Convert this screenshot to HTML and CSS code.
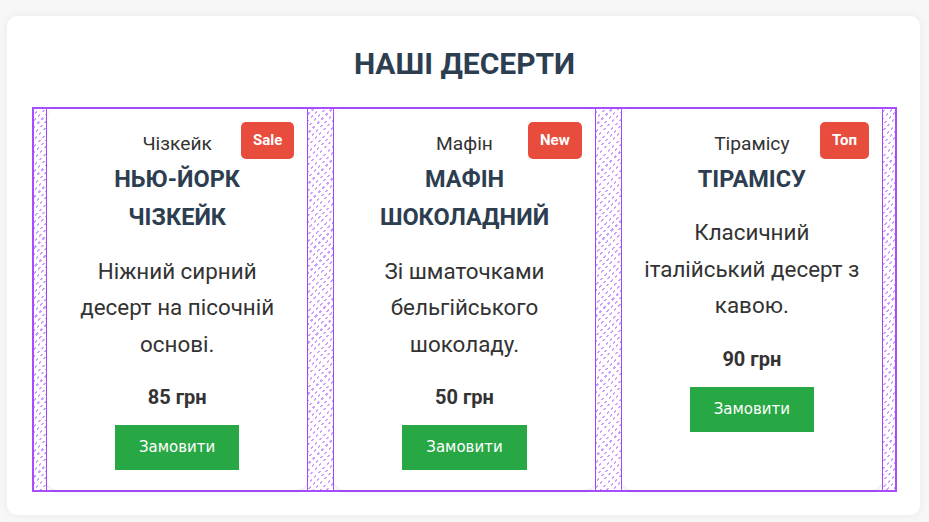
FILE: index.html
```html
<!DOCTYPE html>
<html lang="uk">
<head>
    <meta charset="UTF-8">
    <meta name="viewport" content="width=device-width, initial-scale=1.0">
    <title>Наші десерти</title>
    <link rel="stylesheet" href="styles.css">
</head>
<body>
    <section class="panel">
        <h1 class="title">НАШІ ДЕСЕРТИ</h1>

        <div class="grid">
            <div class="cell">
                <div class="card">
                    <span class="badge">Sale</span>
                    <p class="kind">Чізкейк</p>
                    <h2>НЬЮ-ЙОРК ЧІЗКЕЙК</h2>
                    <p class="desc">Ніжний сирний десерт на пісочній основі.</p>
                    <p class="price">85 грн</p>
                    <button class="order">Замовити</button>
                </div>
            </div>

            <div class="cell">
                <div class="card">
                    <span class="badge">New</span>
                    <p class="kind">Мафін</p>
                    <h2>МАФІН ШОКОЛАДНИЙ</h2>
                    <p class="desc">Зі шматочками бельгійського шоколаду.</p>
                    <p class="price">50 грн</p>
                    <button class="order">Замовити</button>
                </div>
            </div>

            <div class="cell">
                <div class="card">
                    <span class="badge">Топ</span>
                    <p class="kind">Тірамісу</p>
                    <h2>ТІРАМІСУ</h2>
                    <p class="desc">Класичний італійський десерт з кавою.</p>
                    <p class="price">90 грн</p>
                    <button class="order">Замовити</button>
                </div>
            </div>
        </div>
    </section>
</body>
</html>
```

FILE: styles.css
```css
body {
    margin: 0;
    padding: 16px 9px 9px 7px;
    font-family: Roboto, 'Liberation Sans', sans-serif;
    background-color: #f7f7f7;
    color: #333;
    line-height: 1.6;
}
.panel {
    background: white;
    border-radius: 10px;
    box-shadow: 0 0 10px rgba(0,0,0,0.06);
    padding: 26px 23px 23px 25px;
}
.title {
    margin: 0 0 21px;
    text-align: center;
    font-size: 30px;
    line-height: 44px;
    color: #2c3e50;
}
.grid {
    display: grid;
    grid-template-columns: repeat(3, 1fr);
    gap: 25px;
    padding: 0 12px;
    border: 2px solid #a64dff;
    background:
        repeating-linear-gradient(45deg, #fff 0 3px, transparent 3px 6px),
        repeating-linear-gradient(135deg, #fff 0 3px, #cf9cff 3px 4.5px);
}
.cell {
    background: white;
    border-left: 1.5px solid #a64dff;
    border-right: 1.5px solid #a64dff;
    display: flex;
}
.card {
    position: relative;
    flex: 1;
    background: white;
    border-radius: 10px;
    box-shadow: 0 1px 4px rgba(0,0,0,0.12);
    padding: 20px 19px 20px;
    text-align: center;
}
.badge {
    position: absolute;
    top: 13px;
    right: 13px;
    background: #e74c3c;
    color: white;
    font-size: 15px;
    font-weight: bold;
    padding: 6px 12px;
    border-radius: 5px;
    line-height: 25px;
}
.kind {
    margin: 0;
    font-size: 19.2px;
}
.card h2 {
    margin: 0 0 16px;
    font-size: 23.5px;
    line-height: 38.4px;
    color: #2c3e50;
}
.desc {
    margin: 0 0 19px;
    font-size: 22.4px;
    line-height: 36.5px;
}
.price {
    margin: 0 0 12px;
    font-size: 20px;
    font-weight: bold;
}
.order {
    background: #28a745;
    color: white;
    border: none;
    padding: 13px 24px;
    font-family: 'DejaVu Sans', sans-serif;
    font-size: 15px;
    line-height: 19px;
    cursor: pointer;
}
```
